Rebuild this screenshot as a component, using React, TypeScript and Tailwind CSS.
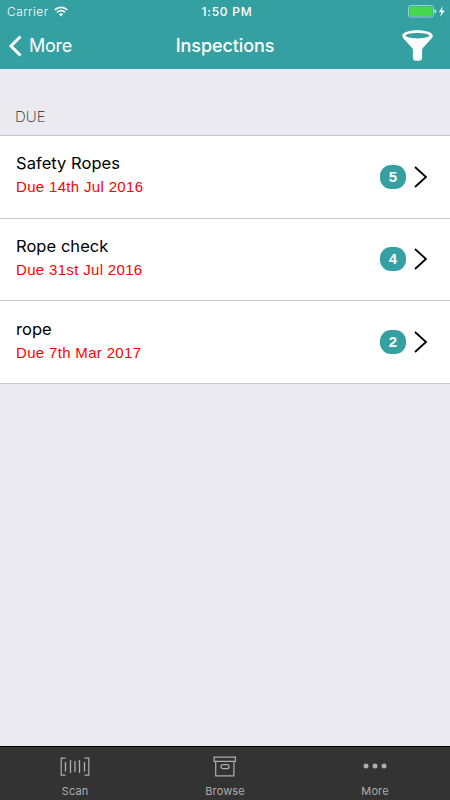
const inspections = [
  { name: "Safety Ropes", due: "Due 14th Jul 2016", count: 5 },
  { name: "Rope check", due: "Due 31st Jul 2016", count: 4 },
  { name: "rope", due: "Due 7th Mar 2017", count: 2 },
];

function StatusBar() {
  return (
    <div className="grid h-[23px] grid-cols-3 items-center px-[5px] text-[12px] leading-[23px]">
      <div className="flex items-center gap-[6px] pl-[2px]">
        <span className="tracking-[0.45px] font-light">Carrier</span>
        <svg width="14" height="11" viewBox="0 0 14 11" fill="none" stroke="white" strokeWidth="1.7">
          <path d="M0.8 3.9a8.8 8.8 0 0 1 12.4 0" />
          <path d="M3.1 6.3a5.5 5.5 0 0 1 7.8 0" />
          <path d="M4.9 8.2a3 3 0 0 1 4.2 0L7 10.4z" fill="white" stroke="none" />
        </svg>
      </div>
      <span className="pl-[4px] text-center font-medium tracking-[0.75px]">1:50 PM</span>
      <div className="flex items-center justify-end">
        <svg width="37" height="13" viewBox="0 0 37 13">
          <rect x="0.5" y="0.5" width="25" height="11.5" rx="2" fill="#35a0a1" stroke="#a4c9ce" />
          <rect x="1.5" y="1.5" width="23" height="9.5" rx="1" fill="#45d950" />
          <path d="M26.6 4q1.6 0.4 1.6 2.3t-1.6 2.3z" fill="#d5ecec" />
          <path d="M34.8 1L31 7h2.3l-1.1 4.8L36.8 5.4h-2.9z" fill="white" />
        </svg>
      </div>
    </div>
  );
}

function NavBar() {
  return (
    <div className="grid h-[46px] grid-cols-3 items-center px-[8px]">
      <button className="flex items-center gap-[6px] text-left">
        <svg width="15" height="22" viewBox="0 0 15 22" fill="none" stroke="white" strokeWidth="3">
          <path d="M12.5 1.5L3 11l9.5 9.5" />
        </svg>
        <span className="text-[18px] leading-[22px] tracking-[-0.3px]">More</span>
      </button>
      <h1 className="text-center text-[18px] leading-[22px] font-medium tracking-[-0.1px]">Inspections</h1>
      <button className="flex justify-end pr-[9px]">
        <svg width="31" height="32" viewBox="0 0 31 32">
          <path
            fill="white"
            fillRule="evenodd"
            d="M15.5 0.3C7 0.3 0.2 2.6 0.2 5.6c0 1 0.5 1.9 1.3 2.8l8.2 9c0.9 1 1.2 1.8 1.2 3v7.8c0 1.6 1.9 2.6 4.6 2.6s4.6-1 4.6-2.6v-7.8c0-1.2 0.3-2 1.2-3l8.2-9c0.8-0.9 1.3-1.8 1.3-2.8 0-3-6.8-5.3-15.3-5.3zM15.5 2.9c6.8 0 12 1.2 12 2.7s-5.2 2.8-12 2.8-12-1.3-12-2.8 5.2-2.7 12-2.7z"
          />
        </svg>
      </button>
    </div>
  );
}

function TabBar() {
  return (
    <nav className="grid h-[54px] grid-cols-3 border-t border-black bg-[#333333] font-['Inter',sans-serif] text-[11px] text-[#adadad]">
      <div className="flex flex-col items-center">
        <svg className="mt-[10px]" width="30" height="20" viewBox="0 0 30 20" fill="none" stroke="#adadad">
          <path d="M5.5 1.2H1.2v17h4.3M24.5 1.2h4.3v17h-4.3" strokeWidth="1.2" />
          <path d="M5.5 5v9.5M10.5 3v13M15 4v11M19.5 3v13M24.5 5v9.5" strokeWidth="1.3" />
        </svg>
        <span className="mt-[7px] leading-[14px] tracking-[0.1px]">Scan</span>
      </div>
      <div className="flex flex-col items-center">
        <svg className="mt-[9px]" width="24" height="21" viewBox="0 0 24 21" fill="none" stroke="#adadad" strokeWidth="1.2">
          <path d="M1.1 1.1h21.3v4.3H1.1zM2.7 5.4v14.4h18.2V5.4" />
          <rect x="8" y="8.7" width="8" height="4" rx="2" />
        </svg>
        <span className="mt-[7px] leading-[14px] tracking-[0.1px]">Browse</span>
      </div>
      <div className="flex flex-col items-center">
        <svg className="mt-[16px]" width="24" height="6" viewBox="0 0 24 6" fill="#adadad">
          <circle cx="3" cy="3" r="2.5" />
          <circle cx="12" cy="3" r="2.5" />
          <circle cx="21" cy="3" r="2.5" />
        </svg>
        <span className="mt-[15px] leading-[14px] tracking-[0.1px]">More</span>
      </div>
    </nav>
  );
}

export default function App() {
  return (
    <div className="flex h-[800px] w-[450px] flex-col overflow-hidden bg-[#eaeaf0] font-['Inter',sans-serif]">
      <header className="bg-[#35a0a1] text-white">
        <StatusBar />
        <NavBar />
      </header>
      <main className="flex-1">
        <h2 className="h-[66px] pt-[39px] pl-[15px] text-[15px] leading-[18px] font-extralight text-[#222]">
          DUE
        </h2>
        <ul className="border-t border-[#c8c7cc] bg-white">
          {inspections.map((item) => (
            <li
              key={item.name}
              className="flex h-[82.67px] items-center border-b border-[#c8c7cc] pr-[22px] pl-[16px]"
            >
              <div className="flex-1 pb-[4px]">
                <p className="text-[16.5px] leading-[24px] tracking-[0.05px] text-black">{item.name}</p>
                <p className="font-['Liberation_Sans',Arial,sans-serif] text-[15px] leading-[23px] tracking-[0.33px] text-[#ff0000]">
                  {item.due}
                </p>
              </div>
              <span className="flex h-[24px] w-[26px] items-center justify-center rounded-[11px] bg-[#35a0a1] font-['Liberation_Sans',Arial,sans-serif] text-[15px] font-bold text-white">
                {item.count}
              </span>
              <svg className="ml-[8px]" width="14" height="22" viewBox="0 0 14 22" fill="none" stroke="black" strokeWidth="1.8">
                <path d="M1 1l11 10L1 21" />
              </svg>
            </li>
          ))}
        </ul>
      </main>
      <TabBar />
    </div>
  );
}
